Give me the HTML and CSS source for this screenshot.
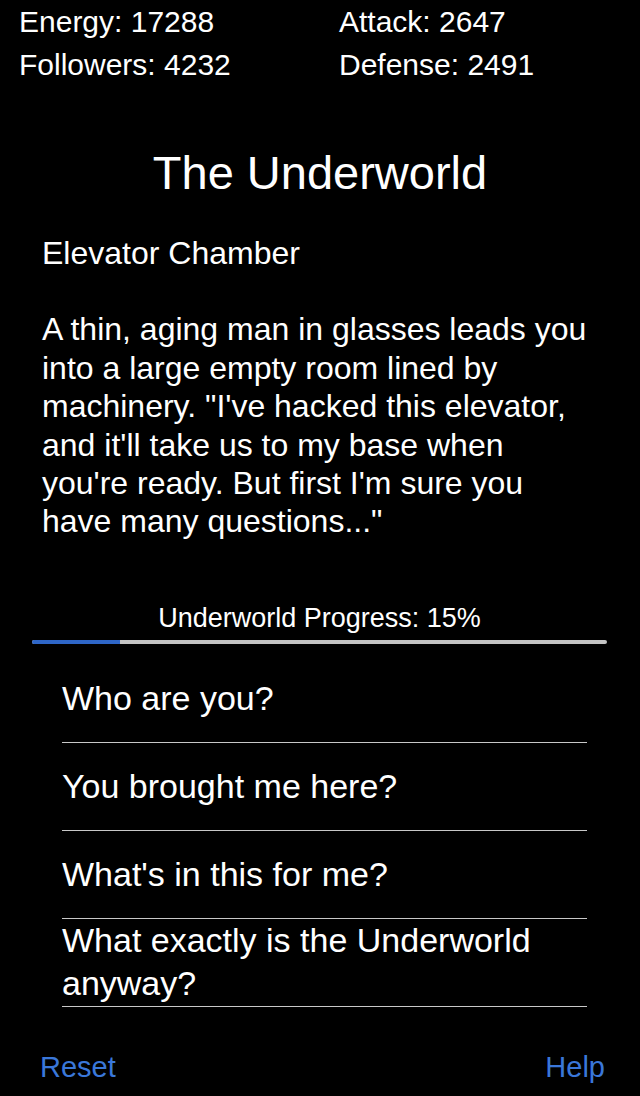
FILE: index.html
```html
<!DOCTYPE html>
<html lang="en">
<head>
  <meta charset="UTF-8" />
  <title>The Underworld</title>
  <link rel="stylesheet" href="styles.css">
</head>
<body>

  <header class="stats">
    <div>Energy: 17288</div>
    <div>Attack: 2647</div>
    <div>Followers: 4232</div>
    <div>Defense: 2491</div>
  </header>

  <main>
    <h1>The Underworld</h1>

    <section class="story">
      <div class="location">Elevator Chamber</div>
      <p>A thin, aging man in glasses leads you into a large empty room lined by machinery. "I've hacked this elevator, and it'll take us to my base when you're ready. But first I'm sure you have many questions..."</p>
    </section>

    <div class="progress">
      <div class="progress-label">Underworld Progress: 15%</div>
      <div class="progress-bar"><div class="progress-fill" style="width: 15.3%"></div></div>
    </div>

    <ul class="choices">
      <li><a href="#">Who are you?</a></li>
      <li><a href="#">You brought me here?</a></li>
      <li><a href="#">What's in this for me?</a></li>
      <li><a href="#">What exactly is the Underworld anyway?</a></li>
    </ul>
  </main>

  <footer>
    <a href="#">Reset</a>
    <a href="#">Help</a>
  </footer>

</body>
</html>
```

FILE: styles.css
```css
/* Base */
body {
  margin: 0;
  background: #000;
  color: #fff;
  font-family: 'Liberation Sans', Arial, Helvetica, sans-serif;
  width: 640px;
  min-height: 1096px;
}
a {
  text-decoration: none;
  color: inherit;
}

/* Stats */
.stats {
  display: grid;
  grid-template-columns: 320px 1fr;
  padding-left: 19px;
  font-size: 30px;
  line-height: 43px;
}

/* Title */
h1 {
  margin: 59px 0 0;
  text-align: center;
  font-size: 47px;
  font-weight: 400;
  line-height: 56px;
}

/* Story */
.story {
  margin-top: 33px;
  padding-left: 42px;
  width: 551px;
  font-size: 32px;
  line-height: 38.4px;
}
.story p {
  margin: 38px 0 0;
}

/* Progress */
.progress {
  margin-top: 62px;
  padding: 0 33px 0 32px;
}
.progress-label {
  text-align: center;
  font-size: 27px;
  line-height: 30px;
}
.progress-bar {
  margin-top: 7px;
  height: 4px;
  background: #c4c4c4;
  border-radius: 2px;
  overflow: hidden;
}
.progress-fill {
  height: 100%;
  background: #2e66c8;
}

/* Choices */
.choices {
  list-style: none;
  margin: 11px 0 0;
  padding: 0 53px 0 62px;
}
.choices li {
  height: 87px;
  display: flex;
  align-items: center;
  border-bottom: 1px solid #c8c8c8;
  font-size: 34px;
  line-height: 43px;
}

/* Footer */
footer {
  display: flex;
  justify-content: space-between;
  margin-top: 43px;
  padding: 0 35px 0 40px;
  font-size: 29px;
  line-height: 34px;
}
footer a {
  color: #3a77d9;
}
```
